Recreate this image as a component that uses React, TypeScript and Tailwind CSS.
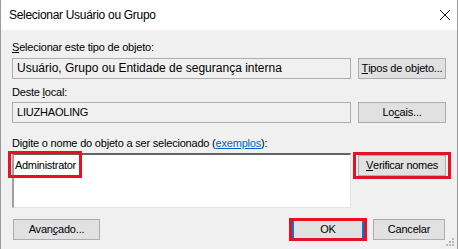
import React from "react";

const font = { fontFamily: '"Liberation Sans", Arial, sans-serif' };

function Btn({
  children,
  className = "",
}: {
  children: React.ReactNode;
  className?: string;
}) {
  return (
    <div
      className={
        "flex h-[21px] items-center justify-center whitespace-nowrap border border-[#adadad] bg-[#e1e1e1] text-[11px] leading-[15px] tracking-[-0.2px] text-black " +
        className
      }
    >
      {children}
    </div>
  );
}

export default function App() {
  return (
    <div
      style={font}
      className="relative h-[249px] w-[458px] overflow-hidden border-x border-[#9a9a9a] bg-[#f0f0f0] text-[11px] leading-[15px] tracking-[-0.2px] text-black"
    >
      {/* Title bar */}
      <div className="flex h-[30px] items-center justify-between bg-white pl-[8px] pr-[6px]">
        <span className="text-[12px] tracking-[-0.3px] text-black">Selecionar Usuário ou Grupo</span>
        <svg width="12" height="12" viewBox="0 0 12 12">
          <path d="M1 1 L11 11 M11 1 L1 11" stroke="#111" strokeWidth="1" fill="none" />
        </svg>
      </div>

      <div className="pl-[11px]">
        {/* Object type */}
        <div className="mt-[10px] h-[15px] whitespace-nowrap">
          <span className="underline">S</span>elecionar este tipo de objeto:
        </div>
        <div className="mt-[3px] flex items-center gap-[7px]">
          <div className="flex h-[21px] w-[339px] items-center whitespace-nowrap border border-[#adadad] bg-[#f0f0f0] pl-[4px] text-[12px] tracking-normal">
            Usuário, Grupo ou Entidade de segurança interna
          </div>
          <Btn className="w-[88px]">
            <span className="underline">T</span>ipos de objeto...
          </Btn>
        </div>

        {/* Location */}
        <div className="mt-[6px] h-[15px] whitespace-nowrap">
          Deste <span className="underline">l</span>ocal:
        </div>
        <div className="mt-[2px] flex items-center gap-[7px]">
          <div className="flex h-[21px] w-[339px] items-center border border-[#adadad] bg-[#f0f0f0] pl-[4px] text-[11px] tracking-[-0.2px]">
            LIUZHAOLING
          </div>
          <Btn className="w-[88px]">
            Lo<span className="underline">c</span>ais...
          </Btn>
        </div>

        {/* Names */}
        <div className="mt-[13px] h-[15px] whitespace-nowrap">
          Digite o nome do objeto a ser selecionado (
          <span className="text-[#0066cc] underline">exemplos</span>):
        </div>
        <div className="mt-[2px] flex items-start gap-[7px]">
          <div className="relative h-[55px] w-[339px] border-t-2 border-l-2 border-r border-b border-t-[#646464] border-l-[#a0a0a0] border-r-[#e3e3e3] border-b-[#e3e3e3] bg-white pl-[1px] pt-[3px] text-[11px] tracking-[-0.3px]">
            Administrator
            <div className="pointer-events-none absolute left-[-6px] top-[-4px] h-[27px] w-[74px] border-[3px] border-[#e81123]" />
          </div>
          <div className="relative mt-[2px]">
            <Btn className="w-[88px] tracking-[-0.3px]">
              <span className="underline">V</span>erificar nomes
            </Btn>
            <div className="pointer-events-none absolute left-[-5px] top-[-3px] h-[27px] w-[98px] border-[3px] border-[#e81123]" />
          </div>
        </div>

        {/* Bottom buttons */}
        <div className="mt-[11px] flex items-center">
          <Btn className="ml-[1px] w-[87px]">
            Avan<span className="underline">ç</span>ado...
          </Btn>
          <div className="relative ml-[192px]">
            <Btn className="w-[72px] border-x-2 border-x-[#0078d7]">OK</Btn>
            <div className="pointer-events-none absolute left-[-3px] top-[-1px] h-[23px] w-[78px] border-[3px] border-[#e81123]" />
          </div>
          <Btn className="ml-[9px] w-[72px]">Cancelar</Btn>
        </div>
      </div>

      {/* Resize grip */}
      <svg
        width="8"
        height="8"
        viewBox="0 0 8 8"
        className="absolute bottom-[3px] right-[3px]"
      >
        <rect x="6" y="0" width="2" height="2" fill="#b8b8b8" />
        <rect x="3" y="3" width="2" height="2" fill="#b8b8b8" />
        <rect x="6" y="3" width="2" height="2" fill="#b8b8b8" />
        <rect x="0" y="6" width="2" height="2" fill="#b8b8b8" />
        <rect x="3" y="6" width="2" height="2" fill="#b8b8b8" />
        <rect x="6" y="6" width="2" height="2" fill="#b8b8b8" />
      </svg>
    </div>
  );
}
